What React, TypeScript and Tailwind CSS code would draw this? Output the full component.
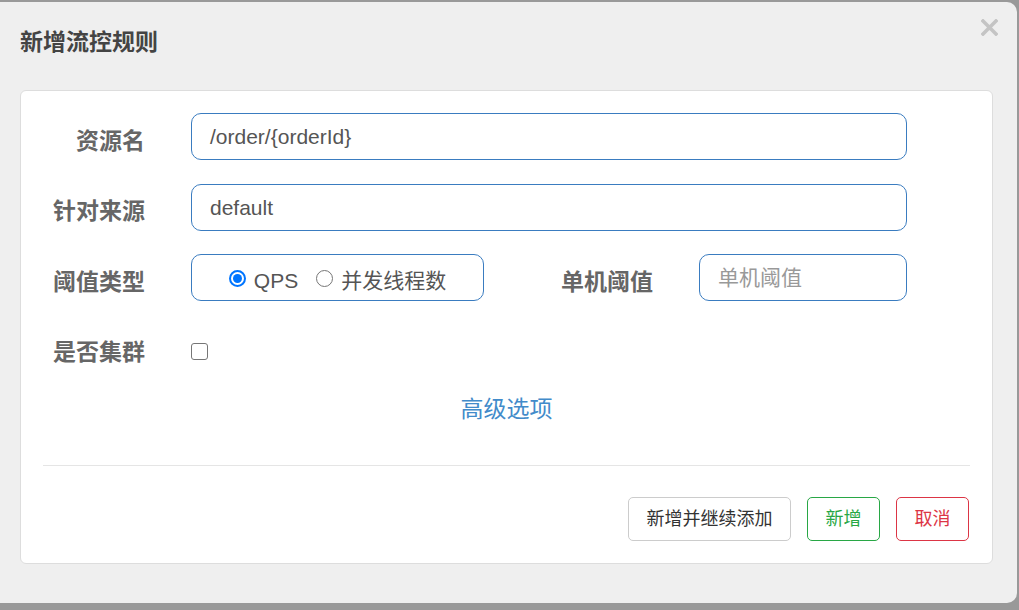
import React from "react";

const FONT = "font-['Liberation_Sans','Noto_Sans_CJK_SC',sans-serif]";

function Label({ children, className = "" }: { children: React.ReactNode; className?: string }) {
  return (
    <div className={`text-right text-[23px] font-bold text-[#666] leading-[30px] ${className}`}>
      {children}
    </div>
  );
}

function TextInput({ value, placeholder, width }: { value?: string; placeholder?: string; width: string }) {
  return (
    <div
      className={`${width} h-[47px] border border-[#3a7cc0] rounded-[10px] px-[18px] flex items-center text-[21px] ${
        value ? "text-[#555]" : "text-[#999]"
      }`}
    >
      {value ?? placeholder}
    </div>
  );
}

function Radio({ checked }: { checked?: boolean }) {
  return checked ? (
    <span className="w-[17px] h-[17px] rounded-full border-[2px] border-[#0075ff] flex items-center justify-center">
      <span className="w-[9px] h-[9px] rounded-full bg-[#0075ff]" />
    </span>
  ) : (
    <span className="w-[17px] h-[17px] rounded-full border border-[#767676] bg-white" />
  );
}

export default function App() {
  return (
    <div className={`w-[1019px] h-[610px] bg-[#999] pt-[2px] overflow-hidden ${FONT}`}>
      <div className="w-[1017px] h-[601px] bg-[#efefef] rounded-r-[10px] px-[20px] flex flex-col">
        {/* header */}
        <div className="h-[88px] flex justify-between items-start">
          <div className="pt-[26px] text-[23px] leading-[28px] font-bold text-[#444]">新增流控规则</div>
          <svg className="mt-[17px] -mr-[1px]" width="17" height="17" viewBox="0 0 17 17">
            <path d="M2 2 L15 15 M15 2 L2 15" stroke="#c4c4c4" strokeWidth="3.6" strokeLinecap="square" />
          </svg>
        </div>

        {/* body card */}
        <div className="w-[973px] h-[474px] bg-white border border-[#dddddd] rounded-[6px] px-[23px] pt-[22px]">
          <div className="flex items-center h-[47px]">
            <Label className="w-[101px] pt-[8px]">资源名</Label>
            <div className="ml-[46px]">
              <TextInput value="/order/{orderId}" width="w-[716px]" />
            </div>
          </div>

          <div className="flex items-center h-[47px] mt-[24px]">
            <Label className="w-[101px] pt-[6px]">针对来源</Label>
            <div className="ml-[46px]">
              <TextInput value="default" width="w-[716px]" />
            </div>
          </div>

          <div className="flex items-center h-[47px] mt-[23px]">
            <Label className="w-[101px] pt-[8px]">阈值类型</Label>
            <div className="ml-[46px] w-[293px] h-[47px] border border-[#3a7cc0] rounded-[10px] flex items-center justify-center text-[21px] text-[#555]">
              <div className="flex items-center pt-[2px]">
                <Radio checked />
              </div>
              <span className="ml-[8px] pt-[6px]">QPS</span>
              <div className="flex items-center pt-[2px] ml-[18px]">
                <Radio />
              </div>
              <span className="ml-[8px] pt-[6px]">并发线程数</span>
            </div>
            <Label className="w-[169px] pt-[8px]">单机阈值</Label>
            <div className="ml-[46px]">
              <TextInput placeholder="单机阈值" width="w-[208px]" />
            </div>
          </div>

          <div className="flex items-center h-[47px] mt-[27px]">
            <Label className="w-[101px]">是否集群</Label>
            <div className="ml-[46px] flex items-center">
              <span className="w-[17px] h-[17px] rounded-[3px] border border-[#767676] bg-white" />
            </div>
          </div>

          <div className="mt-[19px] text-center text-[23px] leading-[30px] text-[#428bca]">高级选项</div>

          <div className="mt-[41px] -mx-[1px] border-t border-[#e5e5e5]" />

          <div className="mt-[31px] flex justify-end gap-[16px] text-[18px]">
            <button className="w-[163px] h-[44px] rounded-[5px] border border-[#cccccc] text-[#333] bg-white">
              新增并继续添加
            </button>
            <button className="w-[73px] h-[44px] rounded-[5px] border border-[#28a745] text-[#28a745] bg-white">
              新增
            </button>
            <button className="w-[73px] h-[44px] rounded-[5px] border border-[#dc3545] text-[#dc3545] bg-white">
              取消
            </button>
          </div>
        </div>
      </div>
    </div>
  );
}
